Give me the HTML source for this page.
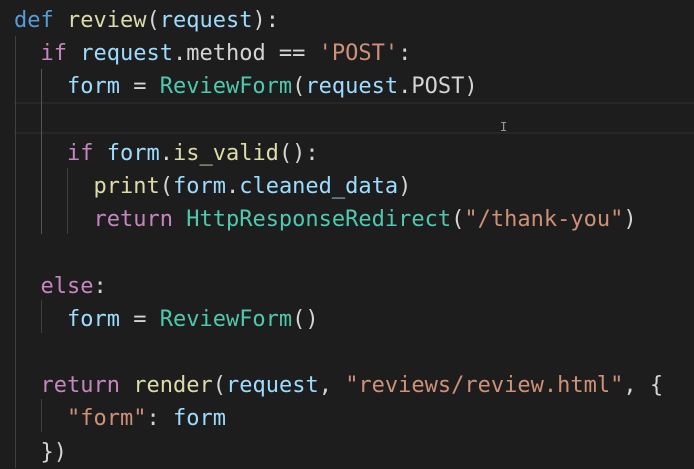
<!DOCTYPE html>
<html><head><style>
html,body{margin:0;padding:0;background:#1d1d1d;width:694px;height:468px;overflow:hidden}
pre{margin:0;position:absolute;left:14px;top:4px;font-family:"DejaVu Sans Mono","Liberation Mono",monospace;font-size:22px;line-height:33.2px;color:#d4d4d4}
.k{color:#569cd6}.f{color:#dcdcaa}.v{color:#9cdcfe}.c{color:#c586c0}.s{color:#ce9178}.t{color:#4ec9b0}
.g{position:absolute;width:1px;background:#404040}
.hl{position:absolute;left:14px;right:0;top:102px;height:28px;border-top:2px solid #272727;border-bottom:2px solid #272727}
</style></head><body>
<div class="hl"></div>
<div class="g" style="left:15px;top:36px;height:432px"></div>
<div class="g" style="left:41px;top:69px;height:165px;background:#555"></div>
<div class="g" style="left:67px;top:168px;height:66px"></div>
<div class="g" style="left:41px;top:300px;height:33px"></div>
<div class="g" style="left:41px;top:399px;height:33px"></div>
<div style="position:absolute;left:500px;top:120px;color:#999;font:12px 'DejaVu Sans Mono',monospace">I</div>
<pre><span class="k">def</span> <span class="f">review</span>(<span class="v">request</span>):
  <span class="c">if</span> <span class="v">request</span>.method == <span class="s">'POST'</span>:
    <span class="v">form</span> = <span class="t">ReviewForm</span>(<span class="v">request</span>.POST)

    <span class="c">if</span> <span class="v">form</span>.<span class="f">is_valid</span>():
      <span class="f">print</span>(<span class="v">form</span>.<span class="v">cleaned_data</span>)
      <span class="c">return</span> <span class="t">HttpResponseRedirect</span>(<span class="s">"/thank-you"</span>)

  <span class="c">else</span>:
    <span class="v">form</span> = <span class="t">ReviewForm</span>()

  <span class="c">return</span> <span class="f">render</span>(<span class="v">request</span>, <span class="s">"reviews/review.html"</span>, {
    <span class="s">"form"</span>: <span class="v">form</span>
  })</pre>
</body></html>
